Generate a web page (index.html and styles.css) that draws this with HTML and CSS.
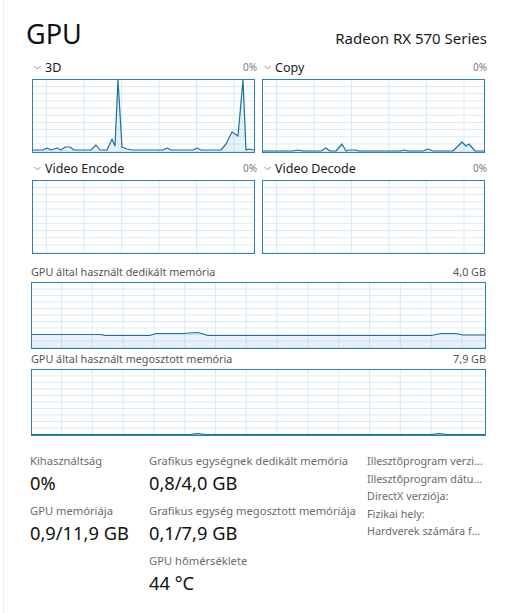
FILE: index.html
```html
<!DOCTYPE html>
<html>
<head>
<meta charset="utf-8">
<link rel="stylesheet" href="styles.css">
</head>
<body>
<div class="page">
  <div class="titlebar">
    <div class="title">GPU</div>
    <div class="model">Radeon RX 570 Series</div>
  </div>

  <div class="engines">
    <div class="engine">
      <div class="ehead">
        <svg class="chev" width="7" height="5" viewBox="0 0 7 5"><polyline points="0.5,1 3.5,4 6.5,1" fill="none" stroke="#8a8a8a" stroke-width="1"/></svg>
        <span class="ename">3D</span>
        <span class="epct">0%</span>
      </div>
      <div class="graph small">
        <svg viewBox="0 0 221 72" preserveAspectRatio="none">
          <polygon class="fill" points="0,72 0,70 10,70 14,68 18,70 24,68 28,70 32,67 37,67 41,70 58,70 63,65 67,70 74,70 79,59 82,66 85,0 89,67 94,69 100,70 113,70 130,70 134,68 138,70 160,70 164,68 168,70 188,70 193,64 199,52 205,56 210,0 213,70 216,69 221,70 221,72"/>
          <polyline class="line" points="0,70 10,70 14,68 18,70 24,68 28,70 32,67 37,67 41,70 58,70 63,65 67,70 74,70 79,59 82,66 85,0 89,67 94,69 100,70 113,70 130,70 134,68 138,70 160,70 164,68 168,70 188,70 193,64 199,52 205,56 210,0 213,70 216,69 221,70"/>
        </svg>
      </div>
    </div>
    <div class="engine">
      <div class="ehead">
        <svg class="chev" width="7" height="5" viewBox="0 0 7 5"><polyline points="0.5,1 3.5,4 6.5,1" fill="none" stroke="#8a8a8a" stroke-width="1"/></svg>
        <span class="ename">Copy</span>
        <span class="epct">0%</span>
      </div>
      <div class="graph small">
        <svg viewBox="0 0 221 72" preserveAspectRatio="none">
          <polygon class="fill" points="0,72 0,71 30,71 35,70 40,71 58,71 63,68 67,71 73,71 79,64 83,71 86,70 92,70 96,71 138,71 141,70 145,71 160,71 165,69 170,71 190,71 199,62 203,66 206,64 212,71 216,71 221,71 221,72"/>
          <polyline class="line" points="0,71 30,71 35,70 40,71 58,71 63,68 67,71 73,71 79,64 83,71 86,70 92,70 96,71 138,71 141,70 145,71 160,71 165,69 170,71 190,71 199,62 203,66 206,64 212,71 216,71 221,71"/>
        </svg>
      </div>
    </div>
    <div class="engine">
      <div class="ehead">
        <svg class="chev" width="7" height="5" viewBox="0 0 7 5"><polyline points="0.5,1 3.5,4 6.5,1" fill="none" stroke="#8a8a8a" stroke-width="1"/></svg>
        <span class="ename">Video Encode</span>
        <span class="epct">0%</span>
      </div>
      <div class="graph small"></div>
    </div>
    <div class="engine">
      <div class="ehead">
        <svg class="chev" width="7" height="5" viewBox="0 0 7 5"><polyline points="0.5,1 3.5,4 6.5,1" fill="none" stroke="#8a8a8a" stroke-width="1"/></svg>
        <span class="ename">Video Decode</span>
        <span class="epct">0%</span>
      </div>
      <div class="graph small"></div>
    </div>
  </div>

  <div class="mem">
    <div class="mhead">
      <span>GPU által használt dedikált memória</span>
      <span>4,0 GB</span>
    </div>
    <div class="graph wide">
      <svg viewBox="0 0 454 65" preserveAspectRatio="none">
        <polygon class="fill" points="0,65 0,51.5 68,51.5 74,52.5 118,52.5 124,50.5 150,50.5 166,49.5 172,51 176,52.5 250,52.5 400,52.5 410,50.5 425,50.5 432,52 454,52 454,65"/>
        <polyline class="line" points="0,51.5 68,51.5 74,52.5 118,52.5 124,50.5 150,50.5 166,49.5 172,51 176,52.5 250,52.5 400,52.5 410,50.5 425,50.5 432,52 454,52"/>
      </svg>
    </div>
  </div>

  <div class="mem">
    <div class="mhead">
      <span>GPU által használt megosztott memória</span>
      <span>7,9 GB</span>
    </div>
    <div class="graph wide">
      <svg viewBox="0 0 454 65" preserveAspectRatio="none">
        <polyline class="line" points="0,64.6 158,64.6 166,63.6 174,64.6 400,64.6 408,63.6 416,64.6 454,64.6"/>
      </svg>
    </div>
  </div>

  <div class="stats">
    <div class="col">
      <div class="stat">
        <div class="slabel">Kihasználtság</div>
        <div class="svalue">0%</div>
      </div>
      <div class="stat">
        <div class="slabel">GPU memóriája</div>
        <div class="svalue">0,9/11,9 GB</div>
      </div>
    </div>
    <div class="col">
      <div class="stat">
        <div class="slabel">Grafikus egységnek dedikált memória</div>
        <div class="svalue">0,8/4,0 GB</div>
      </div>
      <div class="stat">
        <div class="slabel">Grafikus egység megosztott memóriája</div>
        <div class="svalue">0,1/7,9 GB</div>
      </div>
      <div class="stat">
        <div class="slabel">GPU hőmérséklete</div>
        <div class="svalue">44 °C</div>
      </div>
    </div>
    <div class="col info">
      <div>Illesztőprogram verzi...</div>
      <div>Illesztőprogram dátu...</div>
      <div>DirectX verziója:</div>
      <div>Fizikai hely:</div>
      <div>Hardverek számára f...</div>
    </div>
  </div>
</div>
</body>
</html>
```

FILE: styles.css
```css
* { box-sizing: border-box; }
html, body {
  margin: 0;
  padding: 0;
  background: #ffffff;
}
body {
  font-family: "Noto Sans", "Open Sans", sans-serif;
  color: #1a1a1a;
  width: 511px;
  height: 613px;
  overflow: hidden;
}
.page {
  height: 613px;
  padding: 15px 25px 0 27px;
  border-left: 1px solid #ececec;
  margin-left: 3px;
}
.titlebar {
  display: flex;
  justify-content: space-between;
  align-items: baseline;
  margin-left: -5px;
  margin-right: -1px;
  height: 42px;
}
.title {
  font-size: 27px;
  line-height: 38px;
  color: #111;
  font-weight: 400;
}
.model {
  font-size: 15px;
  color: #1a1a1a;
}
.engines {
  display: grid;
  grid-template-columns: 223px 223px;
  column-gap: 7px;
  row-gap: 5px;
  margin-left: 1px;
  margin-bottom: 8px;
}
.ehead {
  display: flex;
  align-items: center;
  height: 22px;
  padding-bottom: 2px;
}
.chev {
  margin-left: 2px;
  margin-right: 4px;
}
.ename {
  font-size: 12.5px;
  color: #1a1a1a;
  flex: 1;
}
.epct {
  font-size: 10px;
  color: #7a7a7a;
  margin-right: -2px;
}
.graph {
  border: 1px solid #2f7fae;
  background-color: #fff;
  background-image:
    linear-gradient(to right, #d9e9f3 1px, transparent 1px),
    linear-gradient(to bottom, #d9e9f3 1px, transparent 1px);
}
.graph svg {
  display: block;
  width: 100%;
  height: 100%;
}
.graph.small {
  height: 74px;
  background-size: 37.5px 100%, 100% 7.2px;
  background-position: 13px 0, 0 6px;
}
.graph.wide {
  height: 67px;
  background-size: 30.8px 100%, 100% 6.5px;
  background-position: 29px 0, 0 5.5px;
}
.fill {
  fill: rgba(17, 125, 187, 0.10);
  stroke: none;
}
.line {
  fill: none;
  stroke: #1f6f9f;
  stroke-width: 1.2;
  stroke-linejoin: round;
}
.mhead {
  display: flex;
  justify-content: space-between;
  font-size: 10.8px;
  color: #555;
  height: 20px;
  align-items: center;
  padding-bottom: 1px;
}
.stats {
  display: grid;
  grid-template-columns: 119px 218px 1fr;
  margin-top: 16px;
  margin-left: -1px;
}
.stat {
  margin-bottom: 6px;
}
.slabel {
  font-size: 11.2px;
  line-height: 18px;
  color: #6b6b6b;
  white-space: nowrap;
}
.svalue {
  font-size: 18.3px;
  line-height: 26px;
  color: #111;
  white-space: nowrap;
}
.info div {
  font-size: 10.8px;
  line-height: 17.5px;
  color: #6b6b6b;
  white-space: nowrap;
}
```
